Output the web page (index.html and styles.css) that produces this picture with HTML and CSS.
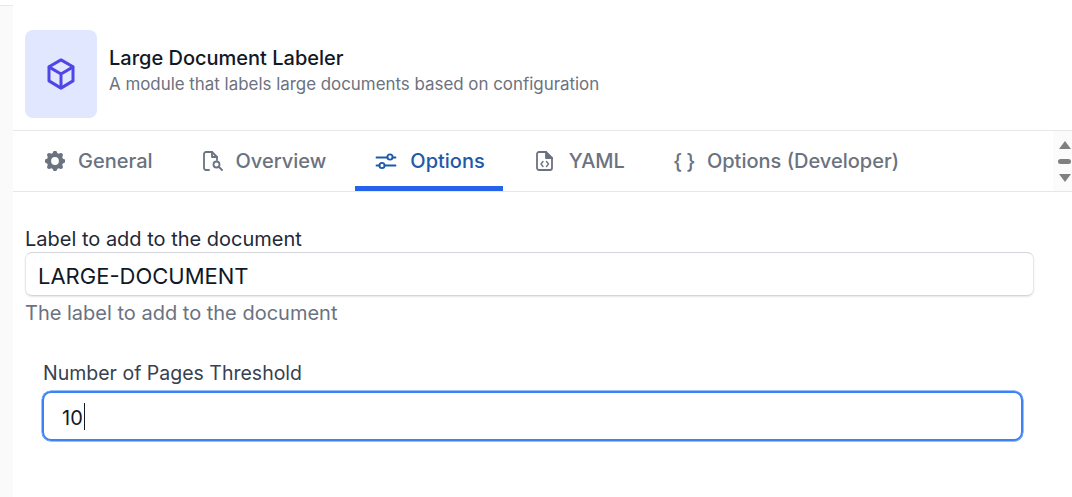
FILE: index.html
```html
<!DOCTYPE html>
<html lang="en">
<head>
<meta charset="utf-8">
<title>Large Document Labeler</title>
<link rel="stylesheet" href="styles.css">
</head>
<body>
<div class="topgap"></div>
<main class="panel">
  <header class="head">
    <div class="logo">
      <svg width="36" height="36" viewBox="0 0 24 24" fill="none" stroke="#4f46e5" stroke-width="2" stroke-linejoin="round" stroke-linecap="round"><path d="M12 2.600l8 4.600v9.400l-8 4.800-8-4.800V7.200z"/><path d="M4.200 7.400L12 12l7.800-4.600M12 12v9.200"/></svg>
    </div>
    <div class="titles">
      <div class="title">Large Document Labeler</div>
      <div class="sub">A module that labels large documents based on configuration</div>
    </div>
  </header>
  <nav class="tabbar">
    <div class="tabs">
      <div class="tab t1">
        <svg width="20" height="20" viewBox="2.300 2.300 15.400 15.400" fill="#6b7280"><path fill-rule="evenodd" d="M11.49 3.17c-.38-1.56-2.6-1.56-2.98 0a1.53 1.53 0 01-2.29.95c-1.37-.84-2.94.73-2.1 2.1.54.89.06 2.05-.95 2.29-1.56.38-1.56 2.6 0 2.98a1.53 1.53 0 01.95 2.29c-.84 1.37.73 2.94 2.1 2.1a1.53 1.53 0 012.29.95c.38 1.56 2.6 1.56 2.98 0a1.53 1.53 0 012.29-.95c1.37.84 2.94-.73 2.1-2.1a1.53 1.53 0 01.95-2.29c1.56-.38 1.56-2.6 0-2.98a1.53 1.53 0 01-.95-2.29c.84-1.37-.73-2.94-2.1-2.1a1.53 1.53 0 01-2.29-.95zM10 13a3 3 0 100-6 3 3 0 000 6z"/></svg>
        <span>General</span>
      </div>
      <div class="tab t2">
        <svg width="20" height="20" viewBox="0 0 20 20" fill="none" stroke="#6b7280" stroke-width="1.800" stroke-linecap="round" stroke-linejoin="round"><path d="M6 19H3a2 2 0 01-2-2V3a2 2 0 012-2h6l5 5v3"/><path d="M9 1v5h5"/><circle cx="13.500" cy="13.500" r="3"/><path d="M16 16l3 3"/></svg>
        <span>Overview</span>
      </div>
      <div class="tab t3 active">
        <svg width="22" height="20" viewBox="0 0 22 20" fill="none" stroke="#1d5aa8" stroke-width="1.800" stroke-linecap="round"><path d="M1.500 6.500h11M17.500 6.500h3M1.500 14.500h3M9.500 14.500h11"/><circle cx="15" cy="6" r="2.600"/><circle cx="7" cy="14.500" r="2.600"/></svg>
        <span>Options</span>
      </div>
      <div class="tab t4">
        <svg width="20" height="20" viewBox="0 0 20 20" fill="none" stroke="#6b7280" stroke-width="1.800" stroke-linecap="round" stroke-linejoin="round"><path d="M3 1h7l6 6v10a2 2 0 01-2 2H3a2 2 0 01-2-2V3a2 2 0 012-2z"/><path d="M10 1v6h6" fill="#6b7280"/><path d="M7 10.500L5 13l2 2.500M10.500 10.500l2 2.500-2 2.500" stroke-width="1.400"/></svg>
        <span>YAML</span>
      </div>
      <div class="tab t5">
        <span class="braces">{}</span>
        <span>Options (Developer)</span>
      </div>
    </div>
    <div class="scroller">
      <span class="up"></span>
      <span class="thumb"></span>
      <span class="down"></span>
    </div>
  </nav>
  <section class="form">
    <div class="field">
      <div class="label">Label to add to the document</div>
      <div class="input">LARGE-DOCUMENT</div>
      <div class="hint">The label to add to the document</div>
    </div>
    <div class="field2">
      <div class="label2">Number of Pages Threshold</div>
      <div class="input2"><span class="value">10</span><i class="caret"></i></div>
    </div>
  </section>
</main>
</body>
</html>
```
FILE: styles.css
```css
* { box-sizing: border-box; }
html, body { height: 100%; }
body {
  margin: 0;
  background: #fafafa;
  font-family: Inter, "Noto Sans", sans-serif;
  overflow: hidden;
  display: flex;
  flex-direction: column;
}
.topgap { height: 5px; background: #fff; flex: none; }
.panel {
  flex: 1;
  margin-left: 13px;
  background: #fff;
  position: relative;
}
body::before {
  content: "";
  position: absolute;
  left: 0; right: 0; top: 5px;
  height: 1px;
  background: #e8e9ec;
}
.head {
  height: 126px;
  padding: 25px 12px 0;
  display: flex;
  gap: 12px;
  border-bottom: 1px solid #e5e7eb;
}
.logo {
  width: 72px;
  height: 88px;
  border-radius: 8px;
  background: #e0e7ff;
  display: flex;
  align-items: center;
  justify-content: center;
}
.titles { padding-top: 16px; }
.title { font-size: 20px; line-height: 24px; font-weight: 500; color: #111827; }
.sub { margin-top: 2px; font-size: 16.900px; line-height: 24px; color: #6b7280; }
.tabbar {
  height: 61px;
  border-bottom: 1px solid #e5e7eb;
  display: flex;
  justify-content: space-between;
}
.tabs { display: flex; }
.tab {
  display: flex;
  align-items: center;
  gap: 13px;
  height: 60px;
  font-size: 20px;
  font-weight: 500;
  color: #6b7280;
  border-bottom: 5px solid transparent;
  padding-top: 5px;
}
.tab svg { flex: none; }
.t1 { padding-left: 32px; padding-right: 30px; }
.t2 { padding-left: 20px; padding-right: 29px; }
.t3 { padding-left: 20px; padding-right: 18px; }
.t4 { padding-left: 33px; padding-right: 48px; }
.tab.active { color: #1d5aa8; border-bottom-color: #2563eb; }
.braces { width: 21px; font-size: 21px; letter-spacing: 4px; white-space: nowrap; }
.scroller {
  width: 19px;
  padding-left: 4px;
  background: #fbfbfb;
  display: flex;
  flex-direction: column;
  align-items: center;
  justify-content: center;
  gap: 10px;
}
.up, .down { width: 0; height: 0; border-left: 6px solid transparent; border-right: 6px solid transparent; }
.up { border-bottom: 8px solid #808080; }
.down { border-top: 8px solid #808080; }
.thumb { width: 13px; height: 5px; border-radius: 3px; background: #808080; }
.form { padding: 35px 12px 0; }
.label { font-size: 20px; line-height: 25px; color: #1f2937; }
.input {
  width: 1009px;
  height: 44px;
  border-radius: 7px;
  border: 1px solid #e5e7eb;
  border-top-color: #d4d5dc;
  border-bottom-color: #d4d5dc;
  box-shadow: 0 1px 2px rgba(0,0,0,.1);
  padding: 0 12px;
  font-size: 22px;
  line-height: 46px;
  color: #111827;
}
.hint { margin-top: 3px; font-size: 20px; line-height: 28px; color: #6b7280; }
.field2 { margin-top: 33px; padding-left: 17px; }
.label2 { padding-left: 1px; font-size: 19.500px; line-height: 26px; color: #374151; }
.input2 {
  margin-top: 5px;
  width: 981px;
  height: 50px;
  border: 2px solid #3b82f6;
  box-shadow: 0 0 0 .5px #3b82f6;
  border-radius: 9px;
  padding: 0 18px;
  font-size: 20px;
  color: #111827;
  display: flex;
  align-items: center;
}
.value { margin-top: 4px; }
.caret { width: 1px; height: 27px; margin-left: 1px; background: #111827; display: block; }
```
